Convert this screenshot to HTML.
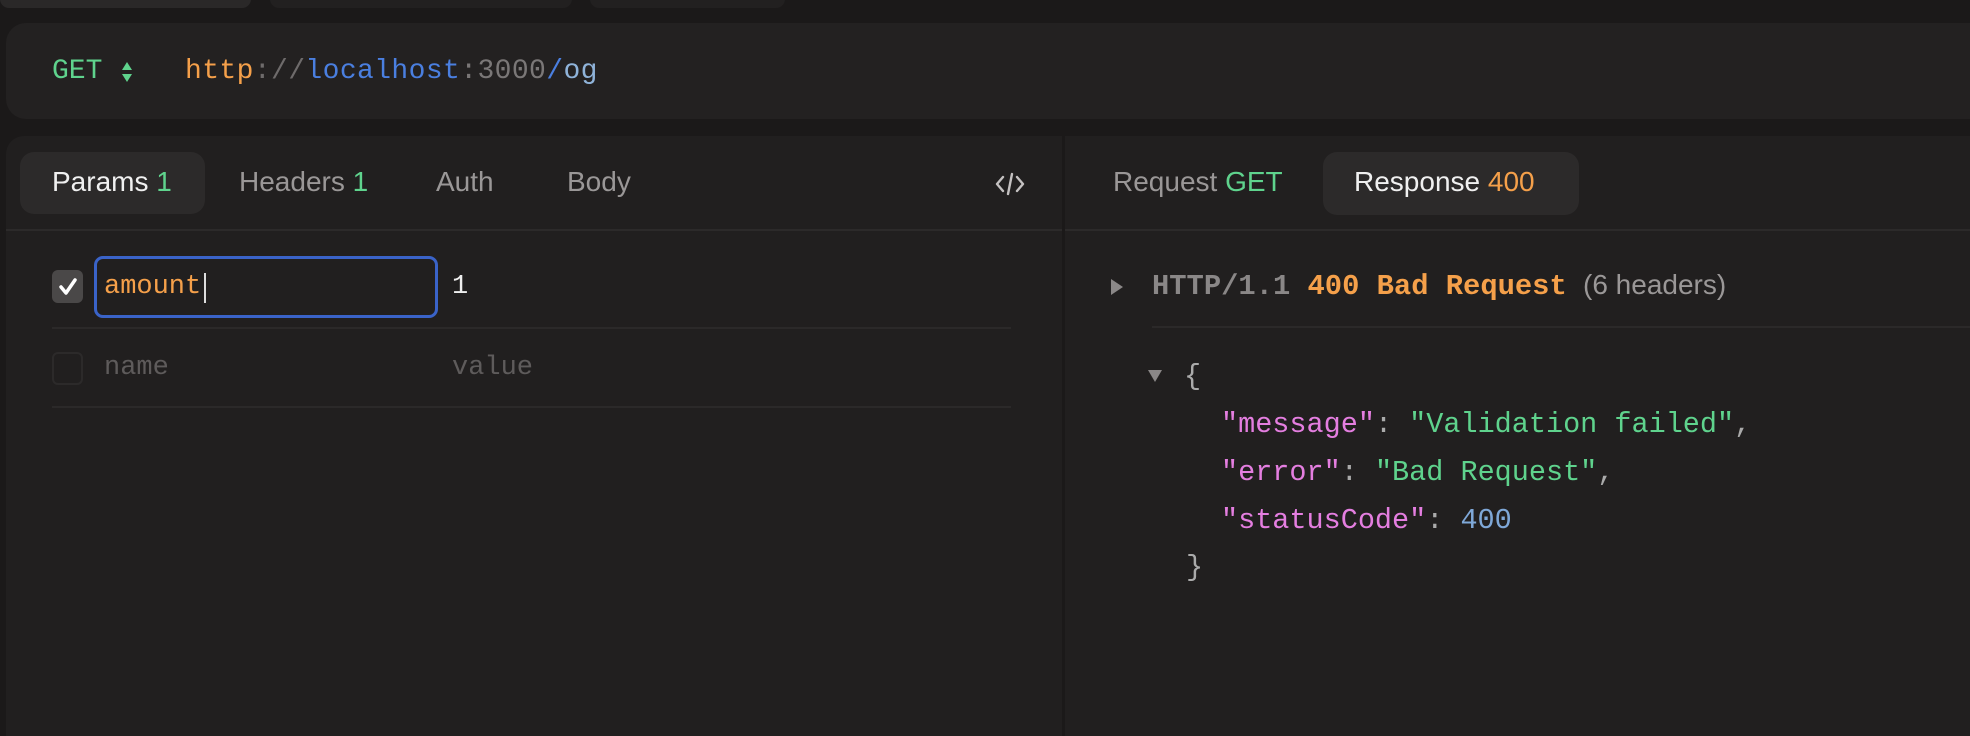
<!DOCTYPE html>
<html><head><style>
body{margin:0;width:1970px;height:728px;background:#1b1919;overflow:hidden;position:relative;font-family:"Liberation Sans",sans-serif}
.a{position:absolute}
.mono{font-family:"Liberation Mono",monospace;font-size:28.5px;white-space:pre}
.sans{font-size:28px;white-space:pre}
</style></head><body>
<div class="a" style="left:0;top:-10px;width:251px;height:18px;background:#2a2828;border-radius:10px"></div>
<div class="a" style="left:270px;top:-10px;width:302px;height:18px;background:#222020;border-radius:10px"></div>
<div class="a" style="left:590px;top:-10px;width:195px;height:18px;background:#222020;border-radius:10px"></div>

<div class="a" style="left:6px;top:23px;width:2000px;height:96px;background:#232121;border-radius:20px"></div>
<div class="a mono" style="left:52px;top:56px;color:#5fd38d;font-size:28px">GET</div>
<svg class="a" style="left:120px;top:60px" width="14" height="24"><path d="M7 2L12 10H2Z M7 22L12 14H2Z" fill="#5fd38d"/></svg>
<div class="a mono" style="left:185px;top:56px;font-size:28px;letter-spacing:0.4px"><span style="color:#f5a04a">http</span><span style="color:#6e6b6b">://</span><span style="color:#4a7fe0">localhost</span><span style="color:#7a7777">:3000</span><span style="color:#4a7fe0">/</span><span style="color:#8fb3d9">og</span></div>

<div class="a" style="left:6px;top:136px;width:1056px;height:600px;background:#211f1f;border-radius:18px 0 0 0"></div>
<div class="a" style="left:1065px;top:136px;width:920px;height:600px;background:#211f1f"></div>
<div class="a" style="left:6px;top:229px;width:1056px;height:2px;background:#2c2a2a"></div>
<div class="a" style="left:1065px;top:229px;width:920px;height:2px;background:#2c2a2a"></div>

<div class="a" style="left:20px;top:152px;width:185px;height:62px;background:#2c2a2a;border-radius:14px"></div>
<div class="a sans" style="left:52px;top:166px;color:#f0f0f0">Params <span style="color:#5fd38d">1</span></div>
<div class="a sans" style="left:239px;top:166px;color:#9a9797">Headers <span style="color:#5fd38d">1</span></div>
<div class="a sans" style="left:436px;top:166px;color:#9a9797">Auth</div>
<div class="a sans" style="left:567px;top:166px;color:#9a9797">Body</div>
<svg class="a" style="left:995px;top:170px" width="30" height="28"><path d="M8 7L2 14L8 21 M22 7L28 14L22 21 M17 4L13 24" stroke="#c4c1c1" stroke-width="2.4" fill="none" stroke-linecap="round" stroke-linejoin="round"/></svg>

<div class="a" style="left:52px;top:270px;width:31px;height:33px;background:#4a4848;border-radius:6px"></div>
<svg class="a" style="left:52px;top:270px" width="31" height="33"><path d="M9 17l5 6 9-13" stroke="#fff" stroke-width="3.5" fill="none" stroke-linecap="round" stroke-linejoin="round"/></svg>
<div class="a" style="left:94px;top:256px;width:338px;height:56px;border:3px solid #3a63c8;border-radius:9px"></div>
<div class="a mono" style="left:104px;top:272px;color:#f5a04a;font-size:27px">amount</div>
<div class="a" style="left:204px;top:273px;width:2px;height:30px;background:#ddd"></div>
<div class="a mono" style="left:452px;top:272px;color:#eee;font-size:27px">1</div>
<div class="a" style="left:52px;top:327px;width:959px;height:2px;background:#2b2929"></div>
<div class="a" style="left:52px;top:352px;width:31px;height:33px;border:2px solid #2c2a2a;box-sizing:border-box;border-radius:6px"></div>
<div class="a mono" style="left:104px;top:353px;color:#5e5b5b;font-size:27px">name</div>
<div class="a mono" style="left:452px;top:353px;color:#5e5b5b;font-size:27px">value</div>
<div class="a" style="left:52px;top:406px;width:959px;height:2px;background:#2b2929"></div>

<div class="a sans" style="left:1113px;top:166px;color:#9a9797">Request <span style="color:#5fd38d">GET</span></div>
<div class="a" style="left:1323px;top:152px;width:256px;height:63px;background:#2c2a2a;border-radius:14px"></div>
<div class="a sans" style="left:1354px;top:166px;color:#f0f0f0">Response <span style="color:#f5a04a">400</span></div>

<svg class="a" style="left:1110px;top:278px" width="14" height="18"><path d="M1 1L13 9L1 17Z" fill="#8a8787"/></svg>
<div class="a mono" style="left:1152px;top:270px;font-size:28.8px;font-weight:bold"><span style="color:#8a8787">HTTP/1.1 </span><span style="color:#f5a04a">400 Bad Request</span></div>
<div class="a sans" style="left:1583px;top:269px;color:#9a9797">(6 headers)</div>
<div class="a" style="left:1152px;top:326px;width:830px;height:2px;background:#2b2929"></div>

<svg class="a" style="left:1147px;top:369px" width="16" height="14"><path d="M1 1H15L8 13Z" fill="#8a8787"/></svg>
<div class="a mono" style="left:1184px;top:360px;color:#aaa">{</div>
<div class="a mono" style="left:1221px;top:408px"><span style="color:#e47ee0">"message"</span><span style="color:#aaa">: </span><span style="color:#5fd38d">"Validation failed"</span><span style="color:#aaa">,</span></div>
<div class="a mono" style="left:1221px;top:456px"><span style="color:#e47ee0">"error"</span><span style="color:#aaa">: </span><span style="color:#5fd38d">"Bad Request"</span><span style="color:#aaa">,</span></div>
<div class="a mono" style="left:1221px;top:504px"><span style="color:#e47ee0">"statusCode"</span><span style="color:#aaa">: </span><span style="color:#7fa8d8">400</span></div>
<div class="a mono" style="left:1186px;top:551px;color:#aaa">}</div>
</body></html>
